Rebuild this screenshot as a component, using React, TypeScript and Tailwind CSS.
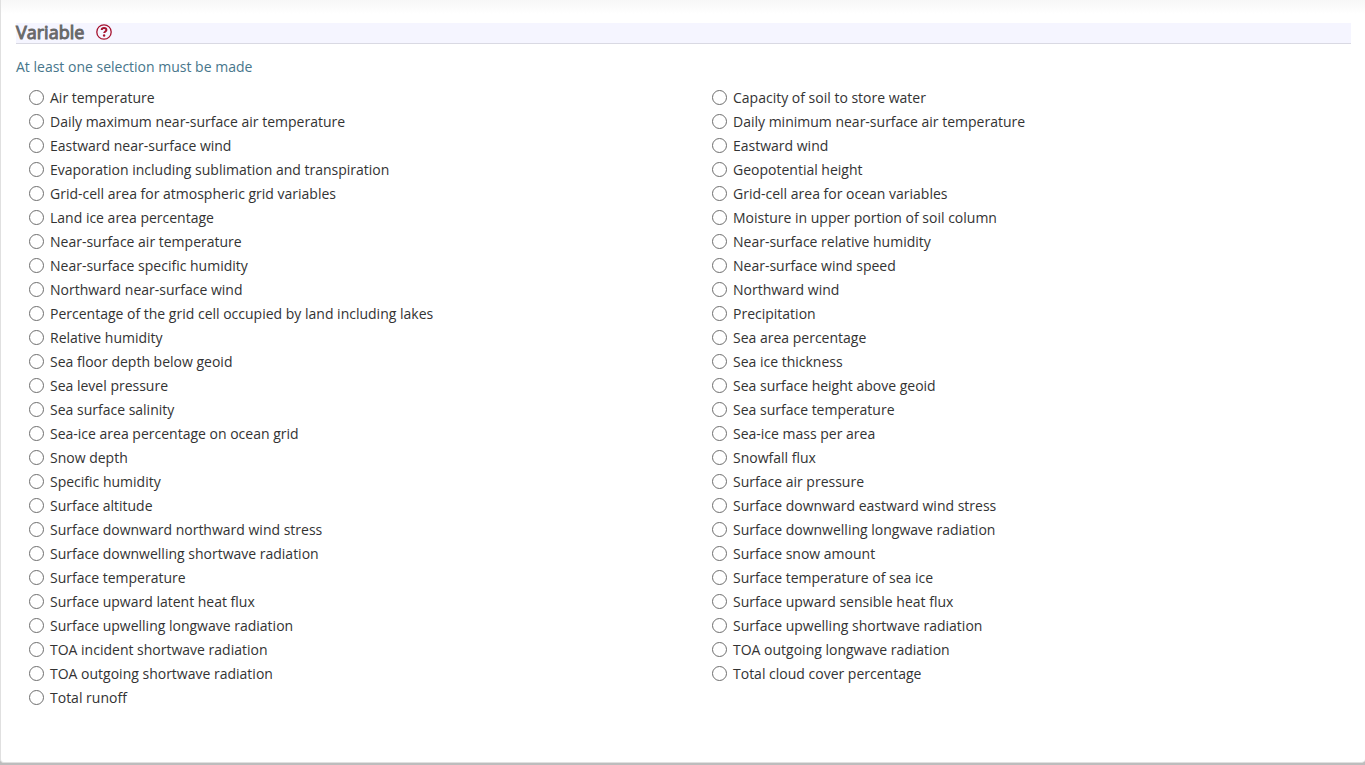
const variables: string[] = [
  "Air temperature", "Capacity of soil to store water",
  "Daily maximum near-surface air temperature", "Daily minimum near-surface air temperature",
  "Eastward near-surface wind", "Eastward wind",
  "Evaporation including sublimation and transpiration", "Geopotential height",
  "Grid-cell area for atmospheric grid variables", "Grid-cell area for ocean variables",
  "Land ice area percentage", "Moisture in upper portion of soil column",
  "Near-surface air temperature", "Near-surface relative humidity",
  "Near-surface specific humidity", "Near-surface wind speed",
  "Northward near-surface wind", "Northward wind",
  "Percentage of the grid cell occupied by land including lakes", "Precipitation",
  "Relative humidity", "Sea area percentage",
  "Sea floor depth below geoid", "Sea ice thickness",
  "Sea level pressure", "Sea surface height above geoid",
  "Sea surface salinity", "Sea surface temperature",
  "Sea-ice area percentage on ocean grid", "Sea-ice mass per area",
  "Snow depth", "Snowfall flux",
  "Specific humidity", "Surface air pressure",
  "Surface altitude", "Surface downward eastward wind stress",
  "Surface downward northward wind stress", "Surface downwelling longwave radiation",
  "Surface downwelling shortwave radiation", "Surface snow amount",
  "Surface temperature", "Surface temperature of sea ice",
  "Surface upward latent heat flux", "Surface upward sensible heat flux",
  "Surface upwelling longwave radiation", "Surface upwelling shortwave radiation",
  "TOA incident shortwave radiation", "TOA outgoing longwave radiation",
  "TOA outgoing shortwave radiation", "Total cloud cover percentage",
  "Total runoff",
];

function HelpIcon() {
  return (
    <svg viewBox="0 0 16 16" className="block size-4" fill="none" stroke="currentColor" aria-hidden="true">
      <circle cx="8" cy="8" r="7.2" strokeWidth="1.3" />
      <path d="M5.7 6C5.8 4.7 6.7 4.1 8 4.1c1.4 0 2.4.7 2.4 1.9 0 1.5-2.2 1.5-2.2 3.1" strokeWidth="2" />
      <circle cx="8.1" cy="11.5" r="1.2" fill="currentColor" stroke="none" />
    </svg>
  );
}

export default function App() {
  return (
    <main className="bg-[#bdbdbd] pb-[2px] font-['Open_Sans',sans-serif] text-sm text-[#333333]">
      <section className="rounded-b border-b border-l border-[#e0e0e0] bg-white bg-linear-to-b from-[#f7f7f7] to-white to-[14px] pt-[23px] pb-[52px]">
        <header className="mr-[14px] ml-[15px] flex h-[21px] items-center gap-3 border-b border-[#d9d9e3] bg-[#f5f5ff] pb-[2px]">
          <h2 className="text-lg leading-[18px] font-normal text-[#696969] [-webkit-text-stroke:1px_#696969]">Variable</h2>
          <button type="button" aria-label="Help on Variable" className="text-[#a6132f]">
            <HelpIcon />
          </button>
        </header>
        <fieldset>
          <legend className="px-[15px] pt-3 pb-2 leading-[22px] text-[#47768b]">At least one selection must be made</legend>
          <div className="grid grid-cols-2 gap-x-0.5">
            {variables.map((name) => (
              <label key={name} className="flex items-start gap-[6px] pl-7 leading-6">
                <input
                  type="radio"
                  name="variable"
                  value={name}
                  className="mt-1 size-[15px] shrink-0 appearance-none rounded-full border border-[#6e6e6e] bg-white checked:border-4 checked:border-[#0075ff]"
                />
                {name}
              </label>
            ))}
          </div>
        </fieldset>
      </section>
    </main>
  );
}
